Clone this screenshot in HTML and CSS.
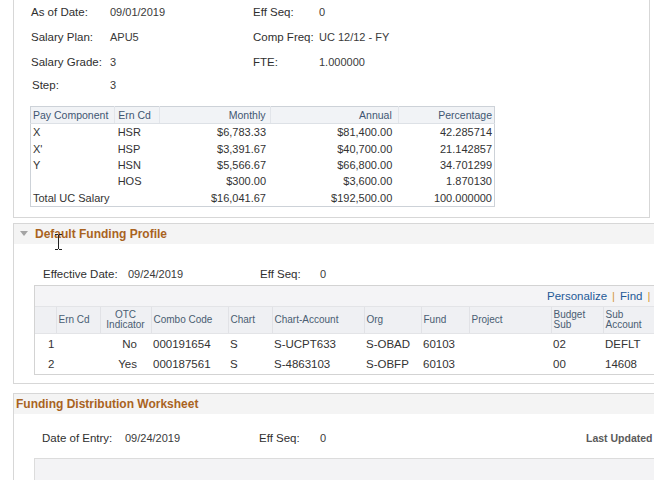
FILE: index.html
```html
<!DOCTYPE html>
<html>
<head>
<meta charset="utf-8">
<link rel="stylesheet" href="styles.css">
</head>
<body>
<div class="page">
  <div class="sec sec-top">
    <div class="fields">
      <div class="frow r1"><span class="lbl c1">As of Date:</span><span class="val c2">09/01/2019</span><span class="lbl c3">Eff Seq:</span><span class="val">0</span></div>
      <div class="frow r2"><span class="lbl c1">Salary Plan:</span><span class="val c2">APU5</span><span class="lbl c3">Comp Freq:</span><span class="val">UC 12/12 - FY</span></div>
      <div class="frow r3"><span class="lbl c1">Salary Grade:</span><span class="val c2">3</span><span class="lbl c3">FTE:</span><span class="val">1.000000</span></div>
      <div class="frow r4"><span class="lbl c1 step">Step:</span><span class="val c2">3</span></div>
    </div>
    <table class="sal">
      <colgroup><col class="w1"><col class="w2"><col class="w3"><col class="w4"><col class="w5"></colgroup>
      <thead>
        <tr><th class="pc">Pay Component</th><th class="ec">Ern Cd</th><th class="mo">Monthly</th><th class="an">Annual</th><th class="pe">Percentage</th></tr>
      </thead>
      <tbody>
        <tr><td class="pc">X</td><td class="ec">HSR</td><td class="mo">$6,783.33</td><td class="an">$81,400.00</td><td class="pe">42.285714</td></tr>
        <tr><td class="pc">X'</td><td class="ec">HSP</td><td class="mo">$3,391.67</td><td class="an">$40,700.00</td><td class="pe">21.142857</td></tr>
        <tr><td class="pc">Y</td><td class="ec">HSN</td><td class="mo">$5,566.67</td><td class="an">$66,800.00</td><td class="pe">34.701299</td></tr>
        <tr><td class="pc"></td><td class="ec">HOS</td><td class="mo">$300.00</td><td class="an">$3,600.00</td><td class="pe">1.870130</td></tr>
        <tr><td class="pc">Total UC Salary</td><td class="ec"></td><td class="mo">$16,041.67</td><td class="an">$192,500.00</td><td class="pe">100.000000</td></tr>
      </tbody>
    </table>
  </div>

  <div class="sec sec-box sec-dfp">
    <div class="sec-head"><span class="tri"></span><span class="title">Default Funding Profile</span></div>
    <svg class="cursor" width="9" height="18" viewBox="0 0 9 18"><path d="M1 1.5h3M5 1.5h3M4.5 2v14M1 16.5h3M5 16.5h3" stroke="#222" stroke-width="1" fill="none"/></svg>
    <div class="eff-row">
      <span class="lbl e1">Effective Date:</span><span class="val e2">09/24/2019</span><span class="lbl e3">Eff Seq:</span><span class="val">0</span>
    </div>
    <div class="grid">
      <div class="grid-bar"><a class="lnk">Personalize</a><span class="sep">|</span><a class="lnk">Find</a><span class="sep">|</span><span class="gicon"></span></div>
      <table class="gt">
        <colgroup><col class="g0"><col class="g1"><col class="g2"><col class="g3"><col class="g4"><col class="g5"><col class="g6"><col class="g7"><col class="g8"><col class="g9"><col class="g10"></colgroup>
        <thead>
          <tr><th></th><th>Ern Cd</th><th class="ctr">OTC<br>Indicator</th><th>Combo Code</th><th>Chart</th><th>Chart-Account</th><th>Org</th><th>Fund</th><th>Project</th><th>Budget<br>Sub</th><th>Sub<br>Account</th></tr>
        </thead>
        <tbody>
          <tr><td class="rn">1</td><td></td><td class="rt">No</td><td>000191654</td><td>S</td><td>S-UCPT633</td><td>S-OBAD</td><td>60103</td><td></td><td>02</td><td>DEFLT</td></tr>
          <tr><td class="rn">2</td><td></td><td class="rt">Yes</td><td>000187561</td><td>S</td><td>S-4863103</td><td>S-OBFP</td><td>60103</td><td></td><td>00</td><td>14608</td></tr>
        </tbody>
      </table>
    </div>
  </div>

  <div class="sec sec-box sec-fdw">
    <div class="sec-head"><span class="title plain">Funding Distribution Worksheet</span></div>
    <div class="eff-row doe">
      <span class="lbl d1">Date of Entry:</span><span class="val d2">09/24/2019</span><span class="lbl d3">Eff Seq:</span><span class="val d4">0</span><span class="last">Last Updated</span>
    </div>
    <div class="inner-box"></div>
  </div>
</div>
</body>
</html>
```

FILE: styles.css
```css
html, body {
  margin: 0;
  padding: 0;
  height: 480px;
  overflow: hidden;
  background: #ffffff;
}
.page {
  font-family: "Liberation Sans", Arial, sans-serif;
  color: #333;
  width: 654px;
  overflow: hidden;
  height: 480px;
}
.sec {
  margin-left: 13px;
  box-sizing: border-box;
}
.sec-top {
  width: 637px;
  border-left: 1px solid #d7d7d7;
  border-right: 1px solid #d7d7d7;
  border-bottom: 1px solid #d7d7d7;
  padding: 0 0 10px 0;
}
.fields {
  padding-left: 17px;
}
.frow {
  display: flex;
  align-items: center;
  white-space: nowrap;
}
.r1 { height: 24px; }
.r2 { height: 25px; }
.r3 { height: 25px; }
.r4 { height: 21px; }
.lbl {
  font-size: 11.5px;
  color: #2f2f2f;
}
.val {
  font-size: 11px;
  color: #3a3a3a;
}
.c1 { width: 79px; }
.c2 { width: 143px; }
.c3 { width: 66px; }
.step { padding-left: 1px; width: 78px; }

.sal {
  margin: 11px 0 0 16px;
  width: 465px;
  border-collapse: collapse;
  table-layout: fixed;
  border: 1px solid #cdd2d8;
  font-size: 11px;
}
.sal .w1 { width: 84px; }
.sal .w2 { width: 45px; }
.sal .w3 { width: 110px; }
.sal .w4 { width: 128px; }
.sal .w5 { width: 96px; }
.sal th {
  height: 16px;
  padding: 0;
  font-weight: normal;
  font-size: 10.5px;
  color: #3f5672;
  background: #f1f3f6;
  border-bottom: 1px solid #dde1e6;
  border-left: 1px solid #e2e5ea;
  text-align: left;
  white-space: nowrap;
}
.sal th:first-child { border-left: none; }
.sal td {
  height: 16.4px;
  padding: 0;
  color: #333;
  white-space: nowrap;
}
.sal .pc { padding-left: 2px; }
.sal .ec { padding-left: 3px; }
.sal .mo { text-align: right; padding-right: 4px; }
.sal .an { text-align: right; padding-right: 6px; }
.sal .pe { text-align: right; padding-right: 2px; }

.sec-box {
  width: 700px;
  border: 1px solid #d7d7d7;
  border-right: none;
  position: relative;
}
.sec-dfp {
  margin-top: 5px;
  padding-bottom: 8px;
}
.sec-head {
  height: 20px;
  background: #f4f4f4;
  display: flex;
  align-items: center;
}
.tri {
  width: 0;
  height: 0;
  margin-left: 6px;
  margin-right: 7px;
  border-left: 4px solid transparent;
  border-right: 4px solid transparent;
  border-top: 5px solid #a4a4a4;
}
.title {
  font-size: 12px;
  font-weight: bold;
  color: #a9631f;
}
.title.plain { margin-left: 2px; }
.cursor {
  position: absolute;
  left: 40px;
  top: 9px;
}
.eff-row {
  display: flex;
  align-items: center;
  height: 20px;
  margin-top: 20px;
  padding-left: 29px;
  white-space: nowrap;
}
.e1 { width: 85px; }
.e2 { width: 132px; }
.e3 { width: 60px; }

.grid {
  margin: 1px 0 0 20px;
  border: 1px solid #d3d3d3;
  border-right: none;
  width: 680px;
}
.grid-bar {
  height: 20px;
  background: #f4f4f6;
  display: flex;
  align-items: center;
  padding-left: 512px;
  font-size: 11.5px;
  white-space: nowrap;
}
.lnk { color: #1f5a96; }
.sep { color: #d49a3a; margin: 0 5px; }
.gicon {
  display: inline-block;
  width: 8px;
  height: 10px;
  border: 1px solid #9aa4b0;
  border-radius: 1px;
}
.gt {
  border-collapse: collapse;
  table-layout: fixed;
  width: 680px;
}
.gt .g0 { width: 21px; }
.gt .g1 { width: 44px; }
.gt .g2 { width: 51px; }
.gt .g3 { width: 77px; }
.gt .g4 { width: 44px; }
.gt .g5 { width: 92px; }
.gt .g6 { width: 57px; }
.gt .g7 { width: 48px; }
.gt .g8 { width: 82px; }
.gt .g9 { width: 52px; }
.gt .g10 { width: 112px; }
.gt th {
  height: 26px;
  padding: 0 0 0 2px;
  font-size: 10px;
  line-height: 10px;
  font-weight: normal;
  color: #4a5d72;
  background: #eff0f3;
  text-align: left;
  border-left: 1px solid #e1e2e6;
  border-top: 1px solid #e3e4e7;
  border-bottom: 1px solid #e3e4e7;
}
.gt th:first-child { border-left: none; }
.gt th.ctr { text-align: center; padding: 0; }
.gt td {
  height: 20px;
  padding: 0 0 0 2px;
  font-size: 11.5px;
  color: #333;
  white-space: nowrap;
}
.gt td.rn { padding-left: 13px; }
.gt td.rt { text-align: right; padding-right: 14px; }

.sec-fdw {
  margin-top: 9px;
  height: 100px;
}
.doe {
  margin-top: 14px;
  padding-left: 28px;
}
.d1 { width: 83px; }
.d2 { width: 134px; }
.d3 { width: 61px; }
.d4 { width: 266px; }
.last {
  font-weight: bold;
  color: #5a5a5a;
  font-size: 10.5px;
}
.inner-box {
  margin: 10px 0 0 20px;
  height: 40px;
  background: #f3f3f5;
  border: 1px solid #dcdcdc;
  border-right: none;
}
```
